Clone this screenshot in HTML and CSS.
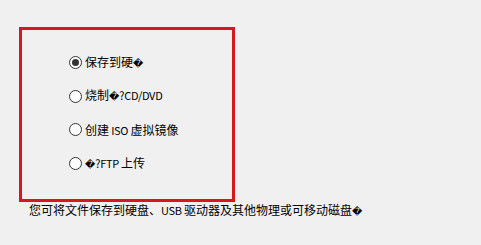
FILE: index.html
```html
<!DOCTYPE html>
<html>
<head>
<meta charset="utf-8">
<link rel="stylesheet" href="styles.css">
</head>
<body>
<div class="box">
  <div class="option"><span class="radio checked"></span><span class="label">保存到硬<span class="bad">�</span></span></div>
  <div class="option"><span class="radio"></span><span class="label">烧制<span class="bad">�</span><span class="lat">?CD/DVD</span></span></div>
  <div class="option"><span class="radio"></span><span class="label">创建<span class="lat"> ISO </span>虚拟镜像</span></div>
  <div class="option"><span class="radio"></span><span class="label"><span class="bad">�</span><span class="lat">?FTP </span>上传</span></div>
</div>
<p class="note">您可将文件保存到硬盘、<span class="lat">USB </span>驱动器及其他物理或可移动磁盘<span class="bad">�</span></p>
</body>
</html>
```

FILE: styles.css
```css
html, body {
  margin: 0;
  padding: 0;
  background: #f0f0f0;
}
body {
  font-family: "Noto Sans CJK SC", "DejaVu Sans", sans-serif;
  font-size: 12px;
  color: #000;
  padding-top: 27px;
}
.box {
  box-sizing: border-box;
  margin-left: 19px;
  width: 216px;
  height: 175px;
  border: 3px solid #d7161d;
  padding: 26px 0 0 47px;
  display: flex;
  flex-direction: column;
  gap: 20.7px;
}
.option {
  display: flex;
  align-items: center;
  gap: 3px;
  height: 13px;
}
.radio {
  box-sizing: border-box;
  width: 13px;
  height: 13px;
  border: 1px solid #333;
  border-radius: 50%;
  background: #fff;
  display: flex;
  align-items: center;
  justify-content: center;
  flex: none;
}
.radio.checked::after {
  content: "";
  width: 7px;
  height: 7px;
  border-radius: 50%;
  background: #333;
}
.label {
  line-height: 16px;
  white-space: nowrap;
}
.bad {
  font-family: "DejaVu Sans", sans-serif;
  font-size: 10px;
}
.lat {
  font-size: 11px;
  letter-spacing: -0.3px;
}
.note {
  margin: 0 0 0 29px;
  line-height: 16px;
}
```
